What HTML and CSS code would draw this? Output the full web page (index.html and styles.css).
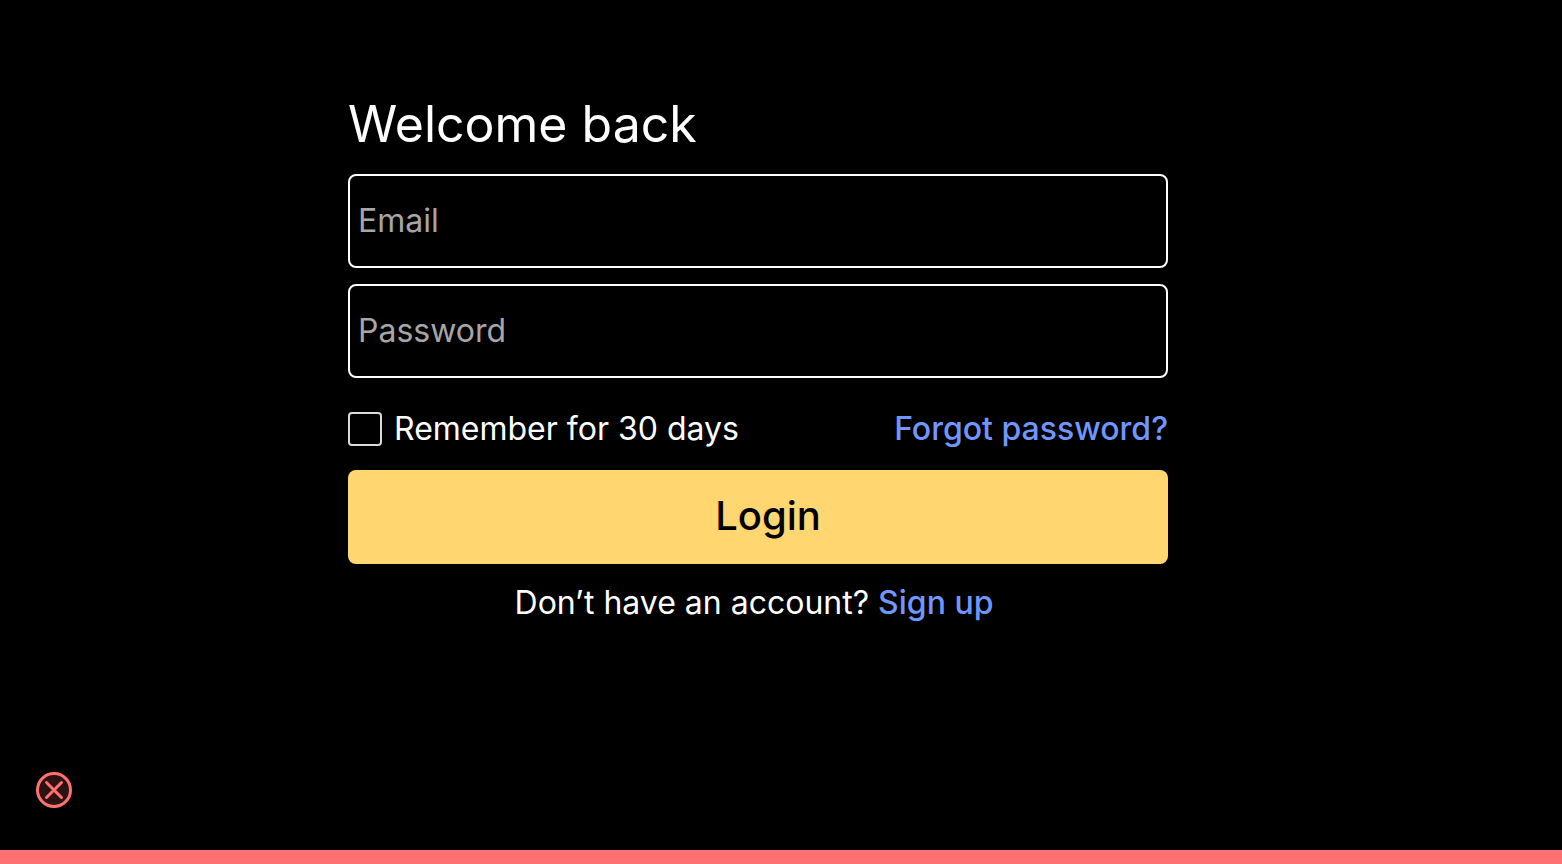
FILE: index.html
```html
<!DOCTYPE html>
<html lang="en">
<head>
<meta charset="utf-8">
<title>Welcome back</title>
<link rel="stylesheet" href="styles.css">
</head>
<body>
<main class="page">
  <form class="login">
    <h1 class="title">Welcome back</h1>
    <input class="field" type="email" placeholder="Email" aria-label="Email">
    <input class="field" type="password" placeholder="Password" aria-label="Password">
    <div class="options">
      <label class="remember"><input class="check" type="checkbox">Remember for 30 days</label>
      <a class="link" href="#forgot">Forgot password?</a>
    </div>
    <button class="submit" type="submit">Login</button>
    <p class="signup">Don’t have an account? <a class="link" href="#signup">Sign up</a></p>
  </form>
</main>
<footer class="status">
  <svg class="status-icon" viewBox="0 0 36 36" role="img" aria-label="Error">
    <circle cx="18" cy="18" r="16.5"/>
    <path d="M10.5 10.5l15 15M25.5 10.5l-15 15"/>
  </svg>
</footer>
</body>
</html>
```

FILE: styles.css
```css
* {
  box-sizing: border-box;
}

body {
  margin: 0;
  min-height: 100vh;
  display: flex;
  flex-direction: column;
  background: #000;
  color: #fff;
  font: 400 32px/40px Inter, "Liberation Sans", sans-serif;
}

.page {
  flex: 1;
  padding: 92px 46px 0 0;
}

.login {
  display: flex;
  flex-direction: column;
  max-width: 820px;
  margin: 0 auto;
}

.title {
  margin: 0 0 18px;
  font-size: 50px;
  font-weight: 400;
  line-height: 64px;
}

.field {
  width: 100%;
  height: 94px;
  margin: 0 0 16px;
  padding: 0 8px 2px;
  border: 2px solid #fff;
  border-radius: 8px;
  background: transparent;
  color: #fff;
  font: inherit;
}

.field::placeholder {
  color: #a6a6a6;
  opacity: 1;
}

.options {
  display: flex;
  justify-content: space-between;
  align-items: center;
  padding: 15px 0 21px;
}

.remember {
  display: flex;
  align-items: center;
  gap: 12px;
}

.check {
  appearance: none;
  width: 34px;
  height: 34px;
  margin: 0;
  border: 2px solid #d9d9d9;
  border-radius: 4px;
}

.check:checked {
  background: #ffd670;
}

.link {
  color: #7096ff;
  font-weight: 500;
  text-decoration: none;
}

.submit {
  height: 94px;
  padding: 0 0 2px 20px;
  border: 0;
  border-radius: 8px;
  background: #ffd670;
  color: #000;
  font: inherit;
  font-size: 40px;
  font-weight: 500;
}

.signup {
  margin: 19px 8px 0 0;
  text-align: center;
}

.status {
  padding: 0 36px 42px;
  border-bottom: 14px solid #ff7070;
}

.status-icon {
  display: block;
  width: 36px;
  height: 36px;
  fill: #2b1313;
  stroke: #ff7070;
  stroke-width: 3;
  stroke-linecap: round;
}
```
